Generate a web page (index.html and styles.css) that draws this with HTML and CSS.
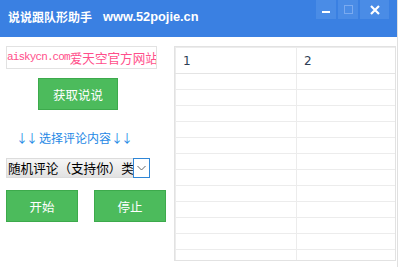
FILE: index.html
```html
<!DOCTYPE html>
<html lang="zh-CN">

<head>
    <meta charset="UTF-8">
    <title>说说跟队形助手</title>
    <link rel="stylesheet" href="styles.css">
</head>

<body>
    <div class="window">
        <div class="titlebar">
            <span class="title">说说跟队形助手</span>
            <span class="site">www.52pojie.cn</span>
            <div class="controls">
                <div class="ctl min"><span class="bar"></span></div>
                <div class="ctl max"><span class="box"></span></div>
                <div class="ctl close">
                    <svg width="10" height="10" viewBox="0 0 10 10">
                        <path d="M1 1 L9 9 M9 1 L1 9" stroke="#fff" stroke-width="2.2" />
                    </svg>
                </div>
            </div>
        </div>
        <div class="main">
            <div class="left">
                <div class="url-input"><span class="latin">aiskycn.com</span><span class="cjk">爱天空官方网站</span><span class="caret"></span></div>
                <button class="btn fetch">获取说说</button>
                <div class="hint"><span class="arrows">↓↓</span>选择评论内容<span class="arrows">↓↓</span></div>
                <div class="select">
                    <span class="select-text">随机评论（支持你）类</span>
                    <span class="select-arrow">
                        <svg width="9" height="6" viewBox="0 0 9 6">
                            <path d="M0.5 1 L4.5 5 L8.5 1" fill="none" stroke="#666" stroke-width="1" />
                        </svg>
                    </span>
                </div>
                <div class="actions">
                    <button class="btn">开始</button>
                    <button class="btn">停止</button>
                </div>
            </div>
            <div class="grid">
                <table>
                    <tr class="head"><td>1</td><td>2</td></tr>
                    <tr><td></td><td></td></tr>
                    <tr><td></td><td></td></tr>
                    <tr><td></td><td></td></tr>
                    <tr><td></td><td></td></tr>
                    <tr><td></td><td></td></tr>
                    <tr><td></td><td></td></tr>
                    <tr><td></td><td></td></tr>
                    <tr><td></td><td></td></tr>
                    <tr><td></td><td></td></tr>
                    <tr><td></td><td></td></tr>
                    <tr><td></td><td></td></tr>
                    <tr><td></td><td></td></tr>
                </table>
            </div>
        </div>
    </div>
</body>

</html>
```

FILE: styles.css
```css
body {
    margin: 0;
    background: #fff;
    font-family: "Noto Sans CJK SC", "DejaVu Sans", sans-serif;
    overflow: hidden;
}

.window {
    width: 398px;
    height: 267px;
    display: flex;
    flex-direction: column;
    border-right: 1px solid #e0e0e0;
    box-sizing: border-box;
}

.titlebar {
    height: 37px;
    background: #3a80e2;
    color: #fff;
    display: flex;
    align-items: flex-start;
    padding-left: 8px;
    flex-shrink: 0;
}

.title,
.site {
    font-weight: bold;
    font-size: 12px;
    line-height: 14px;
    margin-top: 10px;
}

.site {
    font-family: "Liberation Sans", sans-serif;
    margin-left: 11px;
    font-size: 12.8px;
}

.controls {
    margin-left: auto;
    margin-right: 8px;
    display: flex;
    gap: 2px;
}

.ctl {
    width: 20px;
    height: 19px;
    background: #4a8ce6;
    display: flex;
    align-items: center;
    justify-content: center;
}

.ctl.close {
    width: 29px;
}

.bar {
    width: 8px;
    height: 2px;
    background: #fff;
    margin-top: 4px;
}

.box {
    width: 7px;
    height: 7px;
    border: 1px solid #7aaaf0;
}

.main {
    flex: 1;
    display: flex;
    min-height: 0;
}

.left {
    width: 174px;
    padding-top: 9px;
    display: flex;
    flex-direction: column;
    flex-shrink: 0;
}

.url-input {
    margin-left: 6px;
    width: 151px;
    height: 23px;
    border: 1px solid #e2e2e2;
    box-sizing: border-box;
    color: #ff4f8b;
    line-height: 21px;
    white-space: nowrap;
    overflow: hidden;
    display: flex;
    align-items: center;
}

.latin {
    font-family: "Liberation Mono", monospace;
    font-size: 11px;
    letter-spacing: -0.9px;
}

.cjk {
    font-size: 12.6px;
}

.caret {
    width: 1px;
    height: 13px;
    background: #000;
}

.btn {
    background: #4cbb5c;
    border: 1px solid #3daa4c;
    color: #fff;
    font-family: "Noto Sans CJK SC", sans-serif;
    font-size: 12.5px;
    height: 32px;
    width: 72px;
    padding: 0;
    cursor: pointer;
}

.fetch {
    margin: 9px 0 0 38px;
    width: 80px;
}

.hint {
    margin-top: 18px;
    margin-left: 16px;
    color: #1e88e5;
    font-size: 12px;
    line-height: 20px;
    white-space: nowrap;
}

.arrows {
    letter-spacing: -2px;
    margin-right: 3px;
}

.select {
    margin: 10px 0 0 6px;
    width: 144px;
    height: 20px;
    display: flex;
    border: 1px solid #dcdcdc;
    box-sizing: border-box;
}

.select-text {
    flex: 1;
    font-size: 12.6px;
    line-height: 18px;
    color: #000;
    background: linear-gradient(#f6f6f6, #e2e2e2);
    white-space: nowrap;
    overflow: hidden;
    padding-left: 1px;
}

.select-arrow {
    width: 15px;
    border: 1px solid #2f86d6;
    margin: -1px -1px -1px 0;
    display: flex;
    align-items: center;
    justify-content: center;
    background: #fff;
}

.actions {
    margin: 12px 0 0 6px;
    display: flex;
    gap: 16px;
}

.grid {
    margin-top: 9px;
    width: 222px;
    height: 215px;
    border: 1px solid #e2e2e2;
    box-sizing: border-box;
    overflow: hidden;
}

table {
    width: 100%;
    border-collapse: collapse;
    table-layout: fixed;
}

td {
    height: 15px;
    padding: 0;
    border-bottom: 1px solid #ececec;
    border-left: 1px solid #ececec;
}

td:first-child {
    width: 113px;
}

.head td {
    height: 25px;
    border-top: 1px solid #ececec;
    border-bottom: 1px solid #e4e4e4;
    font-family: "DejaVu Sans", sans-serif;
    font-size: 12px;
    color: #2e3e55;
    padding-left: 7px;
}
```
